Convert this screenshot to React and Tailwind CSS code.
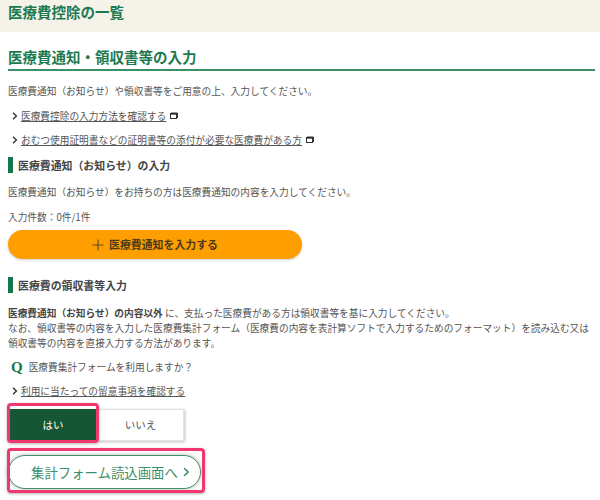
const font = { fontFamily: '"Noto Sans CJK JP", sans-serif' };

function Chevron({ className = "", w = 6, h = 8 }) {
  return (
    <svg width={w} height={h} viewBox="0 0 6 8" className={className} fill="none" stroke="currentColor" strokeWidth="1.4">
      <path d="M1 0.8 L4.4 4 L1 7.2" />
    </svg>
  );
}

function External() {
  return (
    <svg width="8" height="8" viewBox="0 0 8 8" className="ml-1 text-[#333]" fill="none" stroke="currentColor">
      <rect x="0.5" y="1.5" width="6" height="5" strokeWidth="1" />
      <path d="M1 1 H7.5 V6" strokeWidth="1" />
      <path d="M0.5 2 H6.5" strokeWidth="1.4" />
    </svg>
  );
}

function LinkRow({ children, ext, className = "" }) {
  return (
    <div className={`flex items-center text-[9.7px] leading-[14px] text-[#555] ${className}`}>
      <Chevron className="ml-3 mr-[3px] text-[#333]" />
      <span className="underline">{children}</span>
      {ext && <External />}
    </div>
  );
}

function SubHead({ children, className = "" }) {
  return (
    <div className={`flex items-center h-[16px] border-l-[5px] border-[#14784a] pl-[5px] ml-2 text-[10.9px] font-bold text-[#444] ${className}`}>
      {children}
    </div>
  );
}

export default function App() {
  return (
    <div className="w-[600px] h-[500px] overflow-hidden bg-white" style={font}>
      <div className="h-[32px] bg-[#f5f2ea] flex items-center pl-2 pb-[8px] text-[14.5px] font-bold text-[#1d7a50]">
        医療費控除の一覧
      </div>
      <div className="mx-2 mt-[15px] h-[24px] border-b-2 border-[#3d8f68] text-[14.5px] leading-[20px] font-bold text-[#1d7a50] w-[587px]">
        医療費通知・領収書等の入力
      </div>
      <p className="ml-2 mt-[13px] text-[9.7px] leading-[14px] text-[#555]">
        医療費通知（お知らせ）や領収書等をご用意の上、入力してください。
      </p>
      <LinkRow ext className="mt-[11px]">医療費控除の入力方法を確認する</LinkRow>
      <LinkRow ext className="mt-[10px]">おむつ使用証明書などの証明書等の添付が必要な医療費がある方</LinkRow>
      <SubHead className="mt-[10px]">医療費通知（お知らせ）の入力</SubHead>
      <p className="ml-2 mt-[12px] text-[9.7px] leading-[14px] text-[#555]">
        医療費通知（お知らせ）をお持ちの方は医療費通知の内容を入力してください。
      </p>
      <p className="ml-2 mt-[11px] text-[9.7px] leading-[14px] text-[#555]">入力件数：0件/1件</p>
      <div className="ml-2 mt-[6px] w-[294px] h-[29px] rounded-full bg-[#ff9e00] shadow-[0_1px_3px_rgba(0,0,0,0.2)] flex items-center justify-center text-[10.9px] font-bold text-[#4a3a1a]">
        <svg width="12" height="12" viewBox="0 0 13 13" className="mr-[5px]" stroke="#5a4a2a" strokeWidth="1.2">
          <path d="M6.5 0.5 V12.5 M0.5 6.5 H12.5" />
        </svg>
        医療費通知を入力する
      </div>
      <SubHead className="mt-[18px]">医療費の領収書等入力</SubHead>
      <div className="ml-2 mt-[13px] w-[585px] text-[9.7px] leading-[15px] text-[#555]">
        <p>
          <span className="font-bold text-[#444]">医療費通知（お知らせ）の内容以外</span> に、支払った医療費がある方は領収書等を基に入力してください。
        </p>
        <p>なお、領収書等の内容を入力した医療費集計フォーム（医療費の内容を表計算ソフトで入力するためのフォーマット）を読み込む又は</p>
        <p>領収書等の内容を直接入力する方法があります。</p>
      </div>
      <div className="flex items-center mt-[8px] ml-[11px] h-[16px] text-[9.7px] text-[#555]">
        <span className="text-[15px] font-bold text-[#14784a] mr-[6px]" style={{ fontFamily: '"Liberation Serif", serif' }}>Q</span>
        医療費集計フォームを利用しますか？
      </div>
      <LinkRow className="mt-[9px]">利用に当たっての留意事項を確認する</LinkRow>
      <div className="flex mt-[11px] ml-[9px] h-[32px]">
        <div className="relative w-[88px] bg-[#155734] text-white text-[10.5px] flex items-center justify-center">
          はい
          <div className="absolute -left-[2px] -right-[2px] -top-[6px] -bottom-[2px] border-[3px] border-[#f0386e] rounded-[4px] shadow-[0_1px_3px_rgba(0,0,0,0.3)]" />
        </div>
        <div className="w-[87px] bg-white border border-[#e5e0d8] shadow-[1px_1px_3px_rgba(0,0,0,0.25)] text-[#555] text-[10.5px] flex items-center justify-center">
          いいえ
        </div>
      </div>
      <div className="relative mt-[14px] ml-2 w-[193px] h-[34px] rounded-full border border-[#3d8f68] bg-white shadow-[0_0_4px_rgba(0,0,0,0.3)] flex items-center text-[13.4px] text-[#3d8f68] pl-[22px]">
        集計フォーム読込画面へ
        <Chevron w={7} h={10} className="ml-[5px] text-[#3d8f68]" />
        <div className="absolute -left-[2px] -top-[8px] w-[198px] h-[45px] border-[3px] border-[#f0386e] rounded-[4px] shadow-[0_1px_3px_rgba(0,0,0,0.3)]" />
      </div>
    </div>
  );
}
